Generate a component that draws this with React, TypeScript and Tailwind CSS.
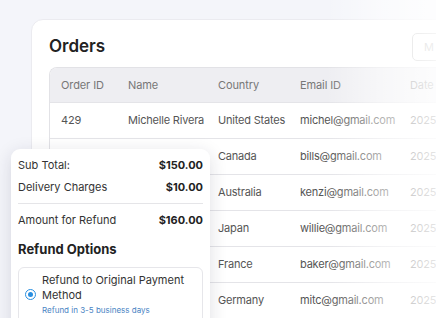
import { useState } from "react";

interface Order { id: string; name: string; country: string; email: string; date: string; }

const ORDERS: Order[] = [
  { id: "429", name: "Michelle Rivera", country: "United States", email: "michel@gmail.com", date: "2025-01-12" },
  { id: "430", name: "Bill Sanders", country: "Canada", email: "bills@gmail.com", date: "2025-01-14" },
  { id: "431", name: "Kenzi Lawson", country: "Australia", email: "kenzi@gmail.com", date: "2025-01-15" },
  { id: "432", name: "Willie Jennings", country: "Japan", email: "willie@gmail.com", date: "2025-01-18" },
  { id: "433", name: "Baker Flores", country: "France", email: "baker@gmail.com", date: "2025-01-20" },
  { id: "434", name: "Mitc Howard", country: "Germany", email: "mitc@gmail.com", date: "2025-01-22" },
];

const colCls = ["w-[67px]", "w-[90px]", "w-[82px]", "w-[110px]", "w-[90px]"];

export default function App() {
  const [option, setOption] = useState("original");

  return (
    <div className="relative h-[318px] w-[436px] overflow-hidden bg-[#f4f5fa] pl-[31px] pt-[19px] font-['Inter',sans-serif]">
      <div className="w-[520px] rounded-[12px] border border-[#ebebf0] bg-white pl-[17px] pt-[13px] pb-4">
        <div className="flex h-[28px] items-center justify-between pr-[98px]">
          <h1 className="text-[17px] font-semibold text-[#222]">Orders</h1>
          <button className="h-[28px] w-[40px] rounded-[5px] border border-[#bbb] px-[11px] text-left text-[11px] text-[#999]">M</button>
        </div>
        <div className="mt-[6px] overflow-hidden rounded-tl-[8px] border-l border-t border-[#e2e2e6]">
          <div className="flex h-[34px] items-center bg-[#eeeef2] pl-[11px] text-[11px] tracking-[-0.1px] text-[#777]">
            <div className={colCls[0]}>Order ID</div>
            <div className={colCls[1]}>Name</div>
            <div className={colCls[2]}>Country</div>
            <div className={colCls[3]}>Email ID</div>
            <div className={colCls[4]}>Date</div>
          </div>
          {ORDERS.map((o) => (
            <div key={o.id} className="flex h-[36px] items-center border-t border-[#e4e4e8] pl-[11px] text-[11px] tracking-[-0.2px] text-[#555]">
              <div className={colCls[0]}>{o.id}</div>
              <div className={colCls[1]}>{o.name}</div>
              <div className={colCls[2]}>{o.country}</div>
              <div className={colCls[3]}>{o.email}</div>
              <div className={colCls[4]}>{o.date}</div>
            </div>
          ))}
        </div>
      </div>

      {/* fade on the right edge */}
      <div className="pointer-events-none absolute right-0 top-0 h-full w-[110px] bg-gradient-to-r from-white/0 via-white/55 to-white/85" />

      {/* refund summary card */}
      <div className="absolute left-[11px] top-[149px] w-[199px] rounded-[9px] bg-white px-[7px] pt-[5px] pb-4 shadow-[0_4px_18px_rgba(30,30,60,0.14)]">
        <div className="flex h-[22px] items-center justify-between text-[11px] text-[#333]">
          <span>Sub Total:</span>
          <span className="font-bold text-[#222]">$150.00</span>
        </div>
        <div className="flex h-[22px] items-center justify-between text-[11px] text-[#333]">
          <span>Delivery Charges</span>
          <span className="font-bold text-[#222]">$10.00</span>
        </div>
        <div className="my-[5px] border-t border-[#e5e5e8]" />
        <div className="flex h-[22px] items-center justify-between text-[11px] text-[#333]">
          <span>Amount for Refund</span>
          <span className="font-bold text-[#222]">$160.00</span>
        </div>
        <h2 className="mt-[9px] text-[13px] font-bold text-[#222]">Refund Options</h2>
        <label className="mt-[7px] flex cursor-pointer items-center gap-[6px] rounded-[6px] border border-[#e6e6ea] px-[6px] pt-[5px] pb-2">
          <input type="radio" className="hidden" checked={option === "original"} onChange={() => setOption("original")} />
          <span className="flex h-[11px] w-[11px] shrink-0 items-center justify-center rounded-full border-[1.5px] border-[#2a8fe0]">
            <span className="h-[5px] w-[5px] rounded-full bg-[#2a8fe0]" />
          </span>
          <span className="flex flex-col">
            <span className="text-[11px] leading-[15px] text-[#333]">Refund to Original Payment Method</span>
            <span className="mt-[1px] text-[8px] text-[#4a84c4]">Refund in 3-5 business days</span>
          </span>
        </label>
      </div>
    </div>
  );
}
